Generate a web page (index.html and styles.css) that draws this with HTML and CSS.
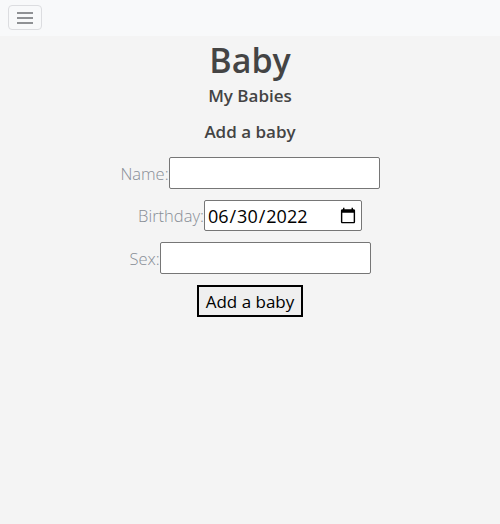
FILE: index.html
```html
<!DOCTYPE html>
<html lang="en">
<head>
<meta charset="utf-8">
<title>Baby</title>
<link rel="stylesheet" href="styles.css">
</head>
<body>
<nav class="navbar">
  <button class="toggler" type="button" aria-label="Toggle navigation">
    <svg width="18" height="14" viewBox="0 0 18 14"><path d="M1 2h16M1 7h16M1 12h16" stroke="#6c6f73" stroke-width="1.6" fill="none"/></svg>
  </button>
</nav>
<main class="content">
  <h1 class="title">Baby</h1>
  <h2 class="subtitle">My Babies</h2>
  <h3 class="section">Add a baby</h3>
  <form class="form">
    <div class="row"><label class="lbl">Name:</label><input class="field" type="text"></div>
    <div class="row"><label class="lbl">Birthday:</label><input class="field date" type="date" value="2022-06-30"></div>
    <div class="row"><label class="lbl">Sex:</label><input class="field" type="text"></div>
    <div class="row"><button class="submit" type="button">Add a baby</button></div>
  </form>
</main>
</body>
</html>
```
FILE: styles.css
```css
html, body { margin: 0; padding: 0; }
body {
  background: #f4f4f4;
  font-family: "Open Sans", "Noto Sans", sans-serif;
  color: #444;
}
.navbar {
  background: #f8f9fa;
  height: 36px;
  padding: 5px 8px 0;
  box-sizing: border-box;
}
.toggler {
  width: 34px;
  height: 25px;
  border: 1px solid #dcdde0;
  border-radius: 4px;
  background: transparent;
  display: flex;
  align-items: center;
  justify-content: center;
  padding: 0;
}
.content {
  display: flex;
  flex-direction: column;
  align-items: center;
}
.title {
  margin: 4px 0 0;
  font-size: 34px;
  font-weight: 600;
  line-height: 40px;
  color: #444;
}
.subtitle {
  margin: 5px 0 0;
  font-size: 17px;
  font-weight: 600;
  line-height: 22px;
  color: #444;
}
.section {
  margin: 14px 0 0;
  font-size: 17px;
  font-weight: 600;
  line-height: 22px;
  color: #444;
}
.form {
  margin-top: 14px;
  display: flex;
  flex-direction: column;
  align-items: center;
  gap: 11px;
}
.row {
  display: flex;
  align-items: center;
  justify-content: center;
}
.lbl {
  font-size: 16.5px;
  font-weight: 300;
  color: #878d96;
}
.field {
  width: 211px;
  height: 32px;
  box-sizing: border-box;
  border: 1px solid #767676;
  border-radius: 2px;
  background: #fff;
  font-family: "Open Sans", sans-serif;
  font-size: 18px;
  padding: 1px 2px;
  margin: 0;
}
.date {
  width: 158px;
  height: 31px;
  color: #000;
}
.submit {
  width: 106px;
  height: 32px;
  border: 2px solid #000;
  background: #efefef;
  font-family: "Open Sans", sans-serif;
  font-size: 17px;
  color: #000;
  padding: 0;
}
```
